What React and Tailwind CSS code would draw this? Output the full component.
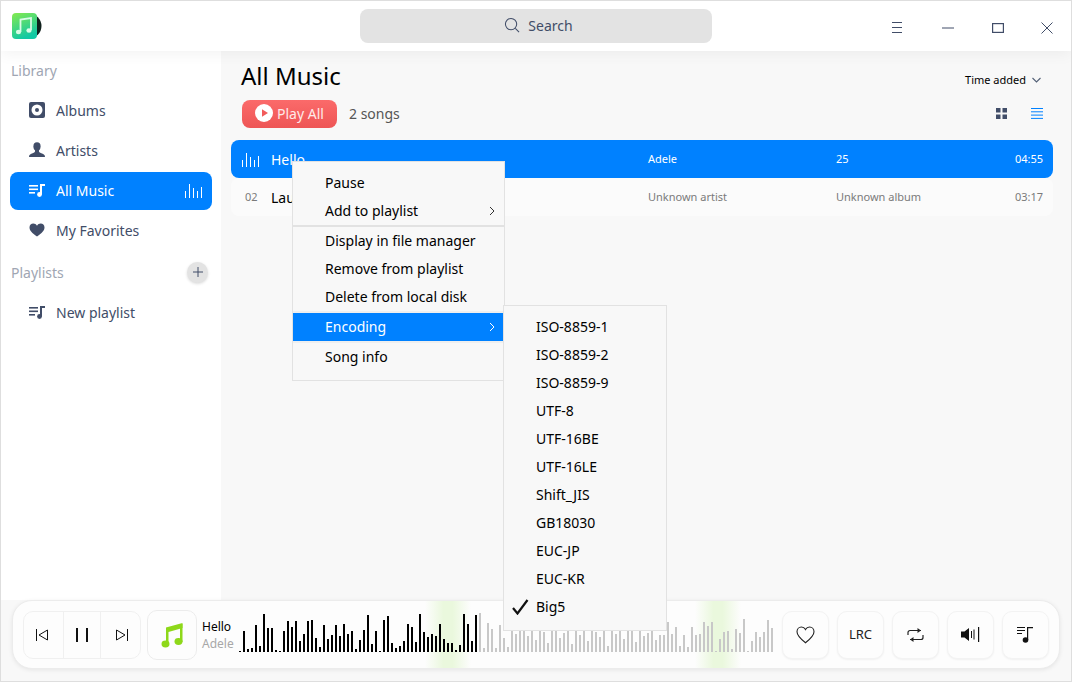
import React from 'react';

const font = { fontFamily: '"Noto Sans", sans-serif' };

const playedBars = [1, 21, 3, 4, 27, 6, 38, 24, 24, 2, 1, 21, 31, 25, 31, 11, 18, 31, 32, 14, 5, 27, 13, 17, 27, 16, 28, 18, 21, 3, 12, 22, 37, 8, 21, 1, 32, 36, 9, 4, 6, 11, 28, 25, 10, 38, 20, 15, 18, 16, 28, 13, 9, 9, 2, 7, 38, 28, 11, 37];
const restBars = [
  39, 4, 29, 23, 4, 27, 14, 5,
  22, 18, 30, 24, 16, 26, 12, 28, 20, 9, 25, 31, 14, 19, 27, 8, 22, 17, 30, 11, 24, 20, 15, 29, 6, 23, 18, 26, 13, 21, 28, 10, 25, 16, 19, 27, 12,
  17, 17, 30, 18, 25, 6, 17, 5, 25, 17, 18, 30, 26, 30, 1, 13, 20, 21, 3, 23, 19, 33, 1, 11, 20, 15, 20, 32, 24,
];

const encodings = ['ISO-8859-1', 'ISO-8859-2', 'ISO-8859-9', 'UTF-8', 'UTF-16BE', 'UTF-16LE', 'Shift_JIS', 'GB18030', 'EUC-JP', 'EUC-KR', 'Big5'];

function Logo() {
  return (
    <svg width="32" height="28" viewBox="0 0 32 28">
      <defs>
        <linearGradient id="logoFill" x1="0" y1="0" x2="0.4" y2="1">
          <stop offset="0" stopColor="#84ea4e" />
          <stop offset="1" stopColor="#12c8a4" />
        </linearGradient>
      </defs>
      <circle cx="18" cy="14" r="12.5" fill="#10201c" />
      <rect x="1" y="1" width="25" height="26" rx="4" fill="url(#logoFill)" />
      <path d="M9.5 20V7.5L20 6v12" fill="none" stroke="#d9fbe6" strokeWidth="1.8" />
      <ellipse cx="7.5" cy="20" rx="2.6" ry="2.2" fill="#d9fbe6" />
      <ellipse cx="18" cy="18.5" rx="2.6" ry="2.2" fill="#d9fbe6" />
    </svg>
  );
}

function ListMusic({ color = '#414d68' }) {
  return (
    <svg width="16" height="14" viewBox="0 0 16 14" fill={color}>
      <rect x="0" y="2" width="9" height="1.6" />
      <rect x="0" y="5.5" width="9" height="1.6" />
      <rect x="0" y="9" width="6" height="1.6" />
      <path d="M11 1h5v2h-3v8.5h-2z" />
      <circle cx="10.5" cy="11.5" r="2.4" />
    </svg>
  );
}

function Eq({ className = '' }) {
  return (
    <svg className={className} width="18" height="15" viewBox="0 0 18 15" stroke="#ffffff" strokeWidth="1" fill="none">
      <path d="M.5 15V8M4.5 15V1M8.5 15V5M12.5 15V8M16.5 15V4" />
    </svg>
  );
}

function NavItem({ icon, label, active, children }) {
  return (
    <div className={`flex items-center h-[38px] pb-[2px] rounded-lg pl-[19px] pr-[9px] text-[14px] ${active ? 'bg-[#0081ff] text-white' : 'text-[#414d68]'}`}>
      <span className="w-[27px] flex items-center">{icon}</span>
      <span className="flex-1">{label}</span>
      {children}
    </div>
  );
}

function MenuItem({ label, arrow, active }) {
  return (
    <div className={`relative flex items-center h-[28px] pb-[2px] pl-[32px] text-[14px] ${active ? 'bg-[#0081ff] text-white' : 'text-black'}`}>
      {label}
      {arrow && (
        <svg className="absolute right-[9px] top-[9px]" width="6" height="10" viewBox="0 0 6 10" fill="none" stroke={active ? '#ffffff' : '#333333'} strokeWidth="1">
          <path d="M1 1l4 4-4 4" />
        </svg>
      )}
    </div>
  );
}

function PlayerButton({ children }) {
  return (
    <div className="w-[47px] h-[48px] rounded-[10px] bg-[#fdfdfd] border border-[#f3f3f3] shadow-[0_1px_2px_rgba(0,0,0,0.05)] flex items-center justify-center">
      {children}
    </div>
  );
}

export default function App() {
  return (
    <div style={font} className="relative w-[1072px] h-[682px] flex flex-col overflow-hidden bg-[#f8f8f8] border border-[#dedede]">
      {/* Title bar */}
      <div className="relative z-10 h-[50px] shrink-0 flex items-center bg-white shadow-[0_3px_14px_rgba(0,0,0,0.05)]">
        <div className="w-[359px] pl-[10px] flex items-center">
          <Logo />
        </div>
        <div className="w-[352px] h-[34px] pb-[2px] pl-[5px] rounded-lg bg-[#e3e3e3] flex items-center justify-center gap-[8px] text-[14px] text-[#414d68]">
          <svg width="16" height="16" viewBox="0 0 17 17" fill="none" stroke="#414d68" strokeWidth="1.1">
            <circle cx="7.5" cy="7.5" r="6" />
            <path d="M12 12l4 4" />
          </svg>
          Search
        </div>
        <div className="flex-1 flex items-center pl-[180px] mt-[3px]">
          <svg width="11" height="11" viewBox="0 0 11 11" stroke="#414d68" strokeWidth="1">
            <path d="M0 .5h10M0 5.5h10M0 10.5h10" />
          </svg>
          <svg className="ml-[39px]" width="12" height="2" viewBox="0 0 12 2" stroke="#414d68" strokeWidth="1">
            <path d="M0 1h12" />
          </svg>
          <svg className="ml-[38px]" width="12" height="10" viewBox="0 0 12 10" fill="none" stroke="#414d68" strokeWidth="1.2">
            <rect x=".6" y=".6" width="10.8" height="8.8" />
          </svg>
          <svg className="ml-[37px]" width="12" height="12" viewBox="0 0 12 12" stroke="#414d68" strokeWidth="1" fill="none">
            <path d="M.5.5l11 11M11.5.5l-11 11" />
          </svg>
        </div>
      </div>

      <div className="flex-1 flex min-h-0">
        {/* Sidebar */}
        <div className="w-[220px] shrink-0 bg-white px-[9px] pt-[7px]">
          <div className="h-[24px] pl-px flex items-center text-[14px] text-[#a0a6b3]">Library</div>
          <div className="mt-[10px] flex flex-col gap-[2px]">
            <NavItem
              label="Albums"
              icon={
                <svg width="16" height="16" viewBox="0 0 16 16">
                  <rect width="16" height="16" rx="2" fill="#414d68" />
                  <circle cx="8" cy="8" r="5.5" fill="#ffffff" />
                  <circle cx="8" cy="8" r="2" fill="#414d68" />
                </svg>
              }
            />
            <NavItem
              label="Artists"
              icon={
                <svg width="16" height="16" viewBox="0 0 16 16" fill="#414d68">
                  <ellipse cx="8" cy="4.5" rx="3.6" ry="4.2" />
                  <path d="M6 8h4v1.6c0 .8 1.2 1.3 3 2 1.6.7 3 1.2 3 3.4H0c0-2.2 1.4-2.7 3-3.4 1.8-.7 3-1.2 3-2z" />
                </svg>
              }
            />
            <NavItem label="All Music" active icon={<ListMusic color="#ffffff" />}>
              <Eq />
            </NavItem>
            <NavItem
              label="My Favorites"
              icon={
                <svg width="16" height="14" viewBox="0 0 16 14" fill="#414d68">
                  <path d="M8 13.5C3 10 .5 7.5.5 4.5.5 2.2 2.2.6 4.3.6 5.8.6 7.2 1.4 8 2.8 8.8 1.4 10.2.6 11.7.6c2.1 0 3.8 1.6 3.8 3.9 0 3-2.5 5.5-7.5 9z" />
                </svg>
              }
            />
          </div>
          <div className="mt-[10px] h-[24px] pl-px pr-[4px] flex items-center justify-between text-[14px] text-[#a0a6b3]">
            Playlists
            <div className="w-[21px] h-[21px] rounded-full bg-[#e3e3e3] shadow-[0_1px_3px_rgba(0,0,0,0.15)] flex items-center justify-center">
              <svg width="10" height="10" viewBox="0 0 10 10" stroke="#414d68" strokeWidth="1">
                <path d="M5 0v10M0 5h10" />
              </svg>
            </div>
          </div>
          <div className="mt-[10px]">
            <NavItem label="New playlist" icon={<ListMusic />} />
          </div>
        </div>

        {/* Main */}
        <div className="flex-1 min-w-0 pt-[8px] pl-[10px] pr-[18px]">
          <div className="flex items-start justify-between pl-[10px] pr-[12px]">
            <h1 className="h-[34px] leading-[34px] text-[24px] text-black">All Music</h1>
            <div className="mt-[13px] flex items-center gap-[6px] text-[11px] text-black">
              Time added
              <svg width="9" height="6" viewBox="0 0 9 6" fill="none" stroke="#536076" strokeWidth="1.1">
                <path d="M.5 1l4 4 4-4" />
              </svg>
            </div>
          </div>
          <div className="mt-[7px] flex items-center pl-[11px] pr-[10px]">
            <div className="w-[95px] h-[28px] pb-[2px] rounded-lg bg-gradient-to-b from-[#fb6a6a] to-[#ee5555] flex items-center pl-[13px] gap-[4px] text-[14px] text-[#ffe9e9]">
              <svg width="18" height="18" viewBox="0 0 18 18">
                <circle cx="9" cy="9" r="9" fill="#ffffff" />
                <path d="M7 5.2l6 3.8-6 3.8z" fill="#f25b5b" />
              </svg>
              Play All
            </div>
            <span className="ml-[12px] -translate-y-px text-[14px] text-[#555555]">2 songs</span>
            <div className="flex-1" />
            <svg className="-translate-y-px" width="11" height="11" viewBox="0 0 11 11" fill="#414d68">
              <rect width="4.5" height="4.5" />
              <rect x="6.5" width="4.5" height="4.5" />
              <rect y="6.5" width="4.5" height="4.5" />
              <rect x="6.5" y="6.5" width="4.5" height="4.5" />
            </svg>
            <svg className="ml-[24px] -translate-y-px" width="12" height="11" viewBox="0 0 12 11" stroke="#0081ff" strokeWidth="1">
              <path d="M0 .5h12M0 3.8h12M0 7.1h12M0 10.4h12" />
            </svg>
          </div>

          <div className="mt-[12px]">
            <div className="h-[38px] rounded-lg bg-[#0081ff] flex items-center text-white">
              <div className="w-[40px] pl-[11px]">
                <Eq />
              </div>
              <div className="w-[377px] text-[14px]">Hello</div>
              <div className="w-[188px] text-[11px]">Adele</div>
              <div className="flex-1 text-[11px]">25</div>
              <div className="pr-[10px] text-[11px]">04:55</div>
            </div>
            <div className="h-[38px] rounded-lg bg-[#fbfbfb] flex items-center text-[#7a7a7a]">
              <div className="w-[40px] pl-[14px] text-[11px]">02</div>
              <div className="w-[377px] text-[14px] text-black">Laugh</div>
              <div className="w-[188px] text-[11px]">Unknown artist</div>
              <div className="flex-1 text-[11px]">Unknown album</div>
              <div className="pr-[10px] text-[11px]">03:17</div>
            </div>
          </div>
        </div>
      </div>

      {/* Player */}
      <div className="h-[81px] shrink-0 px-[11px] bg-[#f8f8f8]">
        <div className="relative h-[69px] rounded-[20px] bg-[#fdfdfd] border border-[#ececec] shadow-[0_1px_4px_rgba(0,0,0,0.08)] flex items-center pl-[10px] pr-[10px] overflow-hidden">
          <div className="absolute left-[412px] top-0 w-[46px] h-full bg-[linear-gradient(90deg,transparent,#eaf8dd_40%,#eaf8dd_60%,transparent)]" />
          <div className="absolute left-[682px] top-0 w-[46px] h-full bg-[linear-gradient(90deg,transparent,#eaf8dd_40%,#eaf8dd_60%,transparent)]" />

          <div className="relative w-[118px] h-[48px] rounded-[10px] border border-[#f0f0f0] bg-[#fdfdfd] flex">
            <div className="flex-1 flex items-center justify-center pr-[2px] border-r border-[#f0f0f0]">
              <svg width="12" height="12" viewBox="0 0 12 12" fill="none" stroke="#111111" strokeWidth="1">
                <path d="M.5 0v12M11.5 1L3 6l8.5 5z" />
              </svg>
            </div>
            <div className="flex-1 flex items-center justify-center border-r border-[#f0f0f0]">
              <svg width="12" height="14" viewBox="0 0 12 14" fill="#111111">
                <rect width="2" height="14" />
                <rect x="10" width="2" height="14" />
              </svg>
            </div>
            <div className="flex-1 flex items-center justify-center pl-[2px]">
              <svg width="12" height="12" viewBox="0 0 12 12" fill="none" stroke="#111111" strokeWidth="1">
                <path d="M11.5 0v12M.5 1L9 6l-8.5 5z" />
              </svg>
            </div>
          </div>

          <div className="relative ml-[6px] w-[50px] h-[50px] rounded-[10px] border border-[#ececec] bg-[#fdfdfd] flex items-center justify-center">
            <svg width="22" height="26" viewBox="0 0 22 26" fill="#8ed81a">
              <path d="M5 5.5L21.5 1v5L7.5 10v12H5z" />
              <path d="M19 2h2.5v18H19z" />
              <ellipse cx="4.5" cy="22" rx="4" ry="3.4" />
              <ellipse cx="17.5" cy="19.5" rx="4" ry="3.4" />
            </svg>
          </div>

          <div className="relative ml-[5px] w-[37px] text-[12px] leading-[17px]">
            <div className="text-black">Hello</div>
            <div className="text-[#a8a8a8]">Adele</div>
          </div>

          <div className="relative h-[40px] w-[535px] self-start mt-[11px] flex items-end gap-[2px]">
            {playedBars.map((h, i) => (
              <div key={i} className="w-[2px] shrink-0 bg-black" style={{ height: h }} />
            ))}
            {restBars.map((h, i) => (
              <div key={i} className="w-[2px] shrink-0 bg-[#c8c8c8]" style={{ height: h }} />
            ))}
          </div>

          <div className="relative ml-[8px] flex gap-[8px]">
            <PlayerButton>
              <svg width="19" height="18" viewBox="0 0 19 18" fill="none" stroke="#222222" strokeWidth="1.1">
                <path d="M9.5 16.8C4 12.5 1 9.5 1 5.8 1 3 3 1 5.4 1c1.7 0 3.2 1 4.1 2.6C10.4 2 11.9 1 13.6 1 16 1 18 3 18 5.8c0 3.7-3 6.700-8.5 11z" />
              </svg>
            </PlayerButton>
            <PlayerButton>
              <span className="text-[13px] text-[#222222]">LRC</span>
            </PlayerButton>
            <PlayerButton>
              <svg width="17" height="16" viewBox="0 0 17 16" fill="none" stroke="#222222" strokeWidth="1.2">
                <path d="M1 8V5.5a2 2 0 0 1 2-2h11" />
                <path d="M16 8v2.5a2 2 0 0 1-2 2H3" />
                <path d="M10.5 1l3.5 2.5-3.500 2.500z" fill="#222222" stroke="none" />
                <path d="M6.5 10l-3.5 2.5 3.500 2.500z" fill="#222222" stroke="none" />
              </svg>
            </PlayerButton>
            <PlayerButton>
              <svg width="19" height="15" viewBox="0 0 19 15" fill="#111111">
                <path d="M0 4.5h3.5L8 1v13L3.5 10.5H0z" />
                <rect x="10" y="4" width="1" height="7" />
                <rect x="12.5" y="2.5" width="1" height="10" />
                <rect x="17" y="0" width="1.2" height="15" />
              </svg>
            </PlayerButton>
            <PlayerButton>
              <svg width="17" height="17" viewBox="0 0 17 17" fill="#111111">
                <rect y="1" width="8" height="1" />
                <rect y="4" width="8" height="1" />
                <rect y="7" width="5" height="1" />
                <path d="M10 1h6v1.2h-4.8V14H10z" />
                <circle cx="8.5" cy="14" r="2.8" />
              </svg>
            </PlayerButton>
          </div>
        </div>
      </div>

      {/* Context menu */}
      <div className="absolute z-20 left-[291px] top-[160px] w-[213px] h-[220px] bg-[#f8f8f8] border border-[#e2e2e2] pt-[7px] flex flex-col">
        <MenuItem label="Pause" />
        <MenuItem label="Add to playlist" arrow />
        <div className="h-[2px] bg-[#e2e2e2]" />
        <MenuItem label="Display in file manager" />
        <MenuItem label="Remove from playlist" />
        <MenuItem label="Delete from local disk" />
        <div className="h-[2px] bg-[#efefef]" />
        <MenuItem label="Encoding" arrow active />
        <div className="h-[2px] bg-[#efefef]" />
        <MenuItem label="Song info" />
      </div>

      {/* Encoding submenu */}
      <div className="absolute z-30 left-[502px] top-[304px] w-[164px] h-[326px] bg-[#f8f8f8] border border-[#e2e2e2] pt-[7px] flex flex-col">
        {encodings.map((name) => (
          <div key={name} className="relative flex items-center h-[28px] pb-[2px] pl-[32px] text-[14px] text-black">
            {name === 'Big5' && (
              <svg className="absolute left-[8px] top-[6px]" width="17" height="16" viewBox="0 0 17 16" fill="none" stroke="#111111" strokeWidth="2.2">
                <path d="M1 9l4.5 5.5L15.5 1" />
              </svg>
            )}
            {name}
          </div>
        ))}
      </div>
    </div>
  );
}
